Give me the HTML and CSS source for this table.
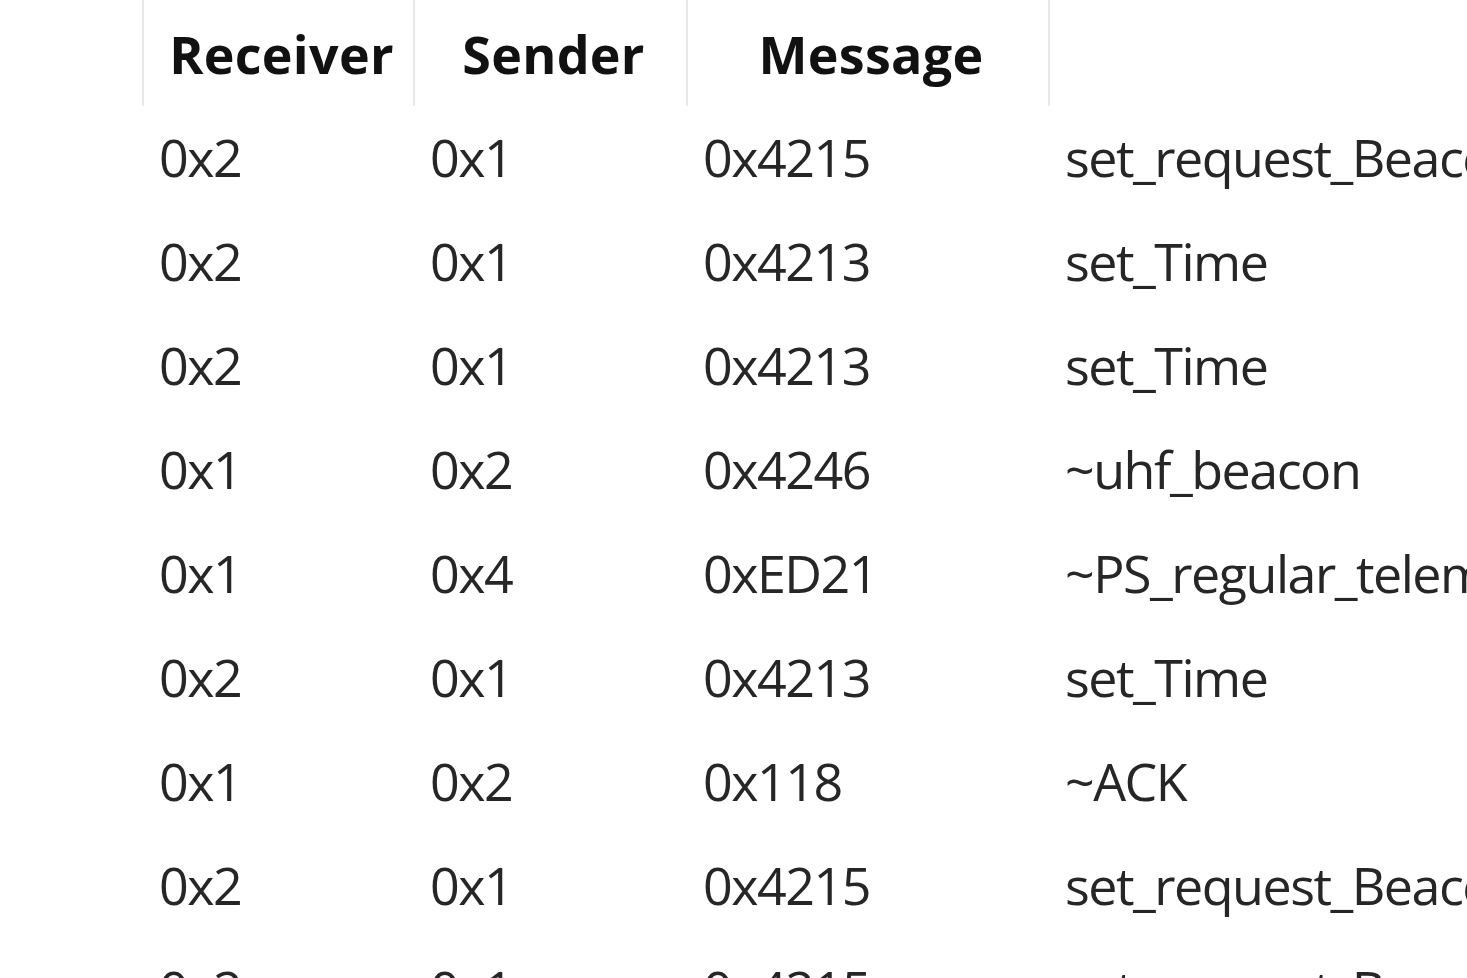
FILE: index.html
```html
<!DOCTYPE html>
<html>
<head>
<meta charset="utf-8">
<link rel="stylesheet" href="styles.css">
</head>
<body>
<div class="table">
  <div class="head">
    <div class="th">Receiver</div>
    <div class="th">Sender</div>
    <div class="th">Message</div>
    <div class="th last"></div>
  </div>
  <div class="row"><div class="td">0x2</div><div class="td">0x1</div><div class="td">0x4215</div><div class="td">set_request_Beacon</div></div>
  <div class="row"><div class="td">0x2</div><div class="td">0x1</div><div class="td">0x4213</div><div class="td">set_Time</div></div>
  <div class="row"><div class="td">0x2</div><div class="td">0x1</div><div class="td">0x4213</div><div class="td">set_Time</div></div>
  <div class="row"><div class="td">0x1</div><div class="td">0x2</div><div class="td">0x4246</div><div class="td">~uhf_beacon</div></div>
  <div class="row"><div class="td">0x1</div><div class="td">0x4</div><div class="td">0xED21</div><div class="td">~PS_regular_telemetry</div></div>
  <div class="row"><div class="td">0x2</div><div class="td">0x1</div><div class="td">0x4213</div><div class="td">set_Time</div></div>
  <div class="row"><div class="td">0x1</div><div class="td">0x2</div><div class="td">0x118</div><div class="td">~ACK</div></div>
  <div class="row"><div class="td">0x2</div><div class="td">0x1</div><div class="td">0x4215</div><div class="td">set_request_Beacon</div></div>
  <div class="row"><div class="td">0x2</div><div class="td">0x1</div><div class="td">0x4215</div><div class="td">set_request_Beacon</div></div>
</div>
</body>
</html>
```
FILE: styles.css
```css
html, body {
  margin: 0;
  padding: 0;
  background: #ffffff;
  overflow: hidden;
  width: 1467px;
  height: 978px;
}
.table {
  margin-left: 142px;
  width: 1325px;
  height: 978px;
  overflow: hidden;
  font-family: "Open Sans", "Noto Sans", sans-serif;
}
.head, .row {
  display: grid;
  grid-template-columns: 271px 273px 362px 1fr;
}
.head {
  height: 106px;
}
.th {
  border-left: 2px solid #e8e8e8;
  display: flex;
  align-items: center;
  justify-content: center;
  font-weight: 700;
  font-size: 52px;
  letter-spacing: 0.3px;
  color: #111111;
  padding-left: 6px;
  box-sizing: border-box;
  white-space: nowrap;
}
.row {
  height: 104px;
}
.td {
  display: flex;
  align-items: center;
  padding-left: 17px;
  padding-bottom: 3px;
  font-size: 52px;
  letter-spacing: -1.5px;
  color: #262626;
  white-space: nowrap;
  overflow: hidden;
}
```
